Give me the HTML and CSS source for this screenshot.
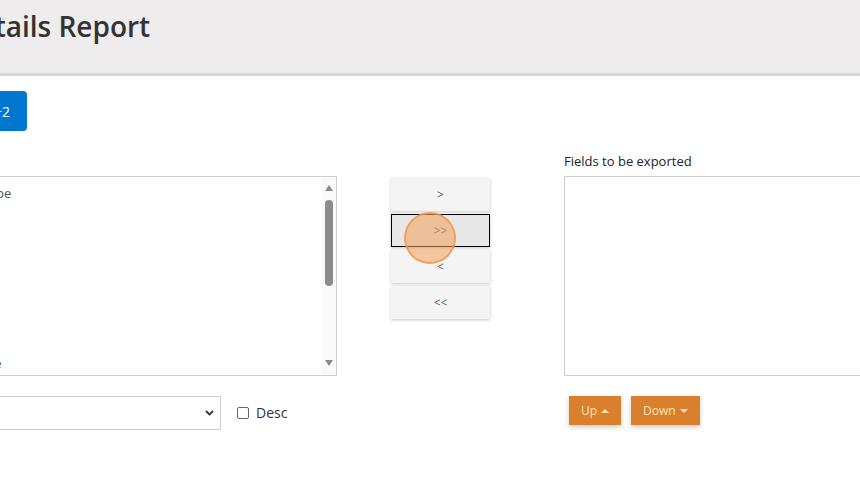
FILE: index.html
```html
<!DOCTYPE html>
<html>
<head>
<meta charset="utf-8">
<link rel="stylesheet" href="styles.css">
</head>
<body>
<div class="page">
  <header class="header">
    <h1 class="title">Details Report</h1>
  </header>
  <div class="toolbar">
    <button class="btn-primary">Ctrl+2</button>
  </div>
  <div class="row">
    <div class="col-left">
      <div class="label">All fields</div>
      <div class="listbox">
        <div class="items">
          <div class="item">Contract Type</div>
          <div class="item">Name</div>
          <div class="item">Email</div>
          <div class="item">Phone</div>
          <div class="item">Position</div>
          <div class="item">Salary</div>
          <div class="item">Gender</div>
          <div class="item">Status</div>
          <div class="item">Location</div>
          <div class="item">Manager</div>
          <div class="item">Review Date</div>
        </div>
        <div class="scrollbar">
          <span class="arrow-up"></span>
          <span class="thumb"></span>
          <span class="track-fill"></span>
          <span class="arrow-down"></span>
        </div>
      </div>
      <div class="sort-row">
        <div class="select">
          <svg class="chev" width="9" height="6" viewBox="0 0 9 6"><path d="M1 1 L4.5 4.5 L8 1" fill="none" stroke="#333" stroke-width="1.8"/></svg>
        </div>
        <label class="check"><span class="box"></span><span class="check-text">Desc</span></label>
      </div>
    </div>
    <div class="col-mid">
      <button class="move">&gt;</button>
      <button class="move focused">&gt;&gt;</button>
      <button class="move">&lt;</button>
      <button class="move">&lt;&lt;</button>
    </div>
    <div class="col-right">
      <div class="label">Fields to be exported</div>
      <div class="listbox right-list"></div>
      <div class="order-row">
        <button class="btn-orange">Up <span class="caret-up"></span></button>
        <button class="btn-orange">Down <span class="caret-down"></span></button>
      </div>
    </div>
  </div>
</div>
<div class="click-dot"></div>
</body>
</html>
```

FILE: styles.css
```css
html, body {
  margin: 0;
  padding: 0;
  overflow: hidden;
  background: #fff;
  font-family: "Open Sans", "Liberation Sans", sans-serif;
  color: #333;
}

.page {
  margin-left: -200px;
  width: 1300px;
}

.header {
  height: 73px;
  background: #eeeced;
  border-bottom: 3px solid #d5d7da;
  padding-left: 158px;
  box-sizing: content-box;
}

.title {
  margin: 0;
  padding-top: 9px;
  font-size: 28px;
  line-height: 34px;
  font-weight: 600;
  color: #333;
}

.toolbar {
  padding-left: 150px;
  margin-top: 15px;
}

.btn-primary {
  height: 40px;
  width: 77px;
  border: none;
  border-radius: 4px;
  background: #0277cf;
  color: #fff;
  font-family: "Open Sans", "Liberation Sans", sans-serif;
  font-size: 14px;
  text-align: right;
  padding: 0 17px 0 0;
  display: block;
}

.row {
  display: flex;
  margin-top: 21px;
  padding-left: 120px;
}

.col-left {
  width: 417px;
}

.label {
  font-size: 13px;
  line-height: 18px;
  color: #222;
  margin-bottom: 6px;
}

.listbox {
  height: 200px;
  border: 1px solid #cfcfcf;
  box-sizing: border-box;
  display: flex;
}

.items {
  flex: 1;
  padding: 8px 6px 0;
}

.item {
  font-size: 13px;
  line-height: 17px;
  color: #555;
  white-space: nowrap;
}

.scrollbar {
  width: 15px;
  background: #fafafa;
  display: flex;
  flex-direction: column;
  align-items: center;
  padding-top: 8px;
  box-sizing: border-box;
}

.arrow-up {
  width: 0;
  height: 0;
  border-left: 4px solid transparent;
  border-right: 4px solid transparent;
  border-bottom: 6px solid #8a8a8a;
}

.arrow-down {
  width: 0;
  height: 0;
  border-left: 4px solid transparent;
  border-right: 4px solid transparent;
  border-top: 6px solid #8a8a8a;
  margin-bottom: 9px;
}

.thumb {
  width: 8px;
  height: 86px;
  border-radius: 4px;
  background: #8c8c8c;
  margin-top: 9px;
}

.track-fill {
  flex: 1;
}

.sort-row {
  display: flex;
  align-items: center;
  margin-top: 20px;
}

.select {
  width: 301px;
  height: 34px;
  border: 1px solid #cfcfcf;
  box-sizing: border-box;
  display: flex;
  align-items: center;
  justify-content: flex-end;
  padding-right: 6px;
}

.chev {
  display: block;
}

.check {
  display: flex;
  align-items: center;
  margin-left: 16px;
}

.box {
  width: 12px;
  height: 12px;
  border: 1px solid #666;
  border-radius: 2px;
  box-sizing: border-box;
  background: #fff;
}

.check-text {
  margin-left: 7px;
  font-size: 14px;
  line-height: 18px;
  color: #333;
}

.col-mid {
  width: 99px;
  margin-left: 54px;
  padding-top: 26px;
  display: flex;
  flex-direction: column;
  gap: 3px;
}

.move {
  height: 33px;
  width: 99px;
  border: 1px solid transparent;
  background: #f4f4f4;
  box-shadow: 0 1px 3px rgba(0, 0, 0, 0.22);
  font-family: "Open Sans", "Liberation Sans", sans-serif;
  font-size: 12px;
  color: #666;
  padding: 0;
}

.move.focused {
  border-color: #000;
  background: #e7e7e7;
}

.col-right {
  width: 400px;
  margin-left: 74px;
}

.right-list {
  border-right: none;
}

.order-row {
  display: flex;
  gap: 10px;
  margin-top: 20px;
  padding-left: 5px;
}

.btn-orange {
  height: 29px;
  border: none;
  background: #d8802c;
  color: #fde3b6;
  font-family: "Open Sans", "Liberation Sans", sans-serif;
  font-size: 12px;
  padding: 0 12px;
  box-shadow: 0 2px 5px rgba(0, 0, 0, 0.22);
  display: flex;
  align-items: center;
  gap: 4px;
}

.caret-up {
  width: 0;
  height: 0;
  border-left: 4px solid transparent;
  border-right: 4px solid transparent;
  border-bottom: 4px solid #fde3b6;
}

.caret-down {
  width: 0;
  height: 0;
  border-left: 4px solid transparent;
  border-right: 4px solid transparent;
  border-top: 4px solid #fde3b6;
}

.click-dot {
  position: absolute;
  left: 404px;
  top: 212px;
  width: 48px;
  height: 48px;
  border-radius: 50%;
  background: rgba(244, 160, 90, 0.55);
  border: 2px solid rgba(240, 150, 70, 0.75);
}
```
